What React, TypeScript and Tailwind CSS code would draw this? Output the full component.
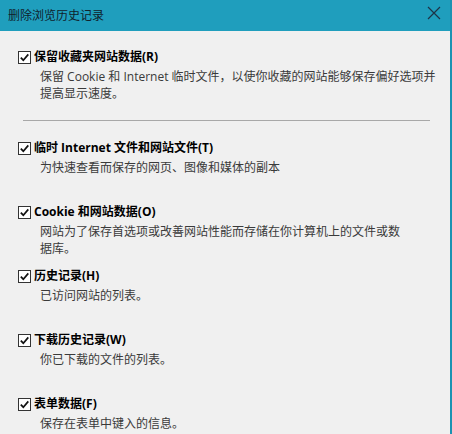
import React from "react";

interface Option {
  label: string;
  lines: string[];
}

const first: Option = {
  label: "保留收藏夹网站数据(R)",
  lines: [
    "保留 Cookie 和 Internet 临时文件，以使你收藏的网站能够保存偏好选项并",
    "提高显示速度。",
  ],
};

const options: Option[] = [
  { label: "临时 Internet 文件和网站文件(T)", lines: ["为快速查看而保存的网页、图像和媒体的副本"] },
  {
    label: "Cookie 和网站数据(O)",
    lines: ["网站为了保存首选项或改善网站性能而存储在你计算机上的文件或数", "据库。"],
  },
  { label: "历史记录(H)", lines: ["已访问网站的列表。"] },
  { label: "下载历史记录(W)", lines: ["你已下载的文件的列表。"] },
  { label: "表单数据(F)", lines: ["保存在表单中键入的信息。"] },
];

function CheckBox() {
  return (
    <span className="w-[13px] h-[13px] border border-[#333] bg-white flex items-center justify-center shrink-0">
      <svg width="11" height="11" viewBox="0 0 11 11">
        <path d="M1.8 5.6 L4.3 8.2 L9.3 2.4" fill="none" stroke="#111" strokeWidth="1.7" />
      </svg>
    </span>
  );
}

function Item({ opt, className = "" }: { opt: Option; className?: string }) {
  return (
    <div className={`h-[56px] ${className}`}>
      <div className="h-[22px] flex items-center gap-[3px]">
        <CheckBox />
        <span className="font-bold text-black">{opt.label}</span>
      </div>
      <div className="ml-[22px] text-[#3a3a3a] leading-[17px]">
        {opt.lines.map((l) => (
          <div key={l} className="whitespace-nowrap">{l}</div>
        ))}
      </div>
    </div>
  );
}

export default function App() {
  return (
    <div
      className="w-[452px] h-[434px] bg-[#f0f0f0] border-r-2 border-[#1b93b2] overflow-hidden text-[12px]"
      style={{ fontFamily: '"Open Sans", "Noto Sans CJK SC", sans-serif' }}
    >
      <div className="h-[31px] bg-[#1f9ebd] flex items-center justify-between pl-[8px] pr-[9px]">
        <span className="text-[#10222c]">删除浏览历史记录</span>
        <svg width="14" height="14" viewBox="0 0 14 14" className="self-start mt-[6px]">
          <path d="M1 1 L13 13 M13 1 L1 13" stroke="#1d3347" strokeWidth="1.2" fill="none" />
        </svg>
      </div>
      <div className="pt-[15px] pl-[18px]">
        <Item opt={first} />
        <div className="mt-[18px] ml-[5px] w-[407px] h-px bg-[#a8a8a8]" />
        <div className="mt-[16px] flex flex-col gap-[8px]">
          {options.map((o) => (
            <Item key={o.label} opt={o} />
          ))}
        </div>
      </div>
    </div>
  );
}
